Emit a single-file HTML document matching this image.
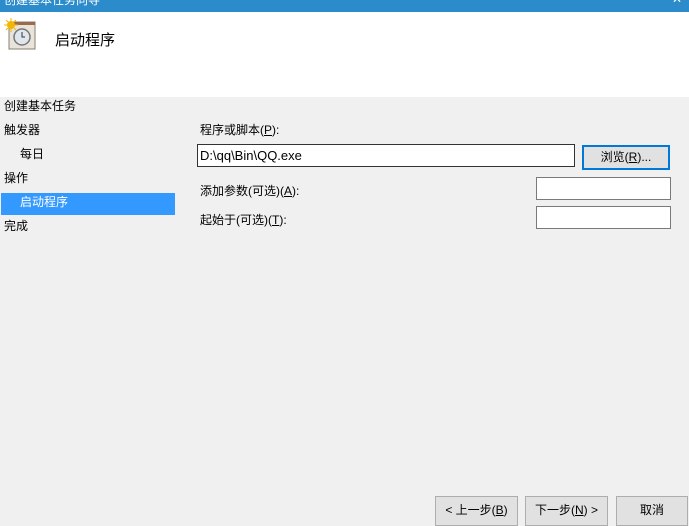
<!DOCTYPE html>
<html><head><meta charset="utf-8"><style>
body{margin:0;width:689px;height:524px;overflow:hidden;background:#f0f0f0;font-family:"Liberation Sans","Noto Sans CJK SC",sans-serif;font-size:12px;color:#000;position:relative}
.a{position:absolute;white-space:nowrap}
.box{position:absolute;box-sizing:border-box;background:#fff}
.btn{position:absolute;box-sizing:border-box;background:#e1e1e1;border:1px solid #adadad;text-align:center;line-height:26px}
u{text-decoration:underline}
</style></head><body>
<div class="a" style="left:0;top:0;width:689px;height:12px;background:#2b8bcb;overflow:hidden">
<div class="a" style="left:4px;top:-9px;color:#fff;font-size:12px">创建基本任务向导</div>
<div class="a" style="left:672px;top:-8px;color:#fff;font-size:12px">✕</div>
</div>
<div class="a" style="left:0;top:12px;width:689px;height:85px;background:#fff"></div>
<svg class="a" style="left:4px;top:18px" width="34" height="34" viewBox="0 0 34 34">
<rect x="5" y="4" width="26" height="27" fill="#e8e4dc" stroke="#8a7f70"/>
<rect x="5" y="4" width="26" height="3" fill="#9a6b4a"/>
<circle cx="18" cy="19" r="8" fill="#dfe6ee" stroke="#777" stroke-width="1.5"/>
<path d="M18 14v5h3" stroke="#333" fill="none"/>
<circle cx="7" cy="7" r="4" fill="#f5b400"/>
<path d="M7 0v3M7 11v3M0 7h3M11 7h3M2 2l2 2M10 10l2 2M2 12l2-2M10 4l2-2" stroke="#f5b400"/>
</svg>
<div class="a" style="left:55px;top:29px;font-size:15px">启动程序</div>
<div class="a" style="left:4px;top:97px">创建基本任务</div>
<div class="a" style="left:4px;top:121px">触发器</div>
<div class="a" style="left:20px;top:145px">每日</div>
<div class="a" style="left:4px;top:169px">操作</div>
<div class="a" style="left:1px;top:193px;width:174px;height:22px;background:#3399ff"></div>
<div class="a" style="left:20px;top:193px;color:#fff;line-height:18px">启动程序</div>
<div class="a" style="left:4px;top:217px">完成</div>
<div class="a" style="left:200px;top:121px">程序或脚本(<u>P</u>):</div>
<div class="box" style="left:197px;top:144px;width:378px;height:23px;border:1px solid #333;padding:3px 2px;font-size:13px">D:\qq\Bin\QQ.exe</div>
<div class="btn" style="left:582px;top:145px;width:88px;height:25px;border:2px solid #0078d7;line-height:21px">浏览(<u>R</u>)...</div>
<div class="a" style="left:200px;top:182px">添加参数(可选)(<u>A</u>):</div>
<div class="box" style="left:536px;top:177px;width:135px;height:23px;border:1px solid #7a7a7a"></div>
<div class="a" style="left:200px;top:211px">起始于(可选)(<u>T</u>):</div>
<div class="box" style="left:536px;top:206px;width:135px;height:23px;border:1px solid #7a7a7a"></div>
<div class="btn" style="left:435px;top:496px;width:83px;height:30px">&lt; 上一步(<u>B</u>)</div>
<div class="btn" style="left:525px;top:496px;width:83px;height:30px">下一步(<u>N</u>) &gt;</div>
<div class="btn" style="left:616px;top:496px;width:72px;height:30px">取消</div>
</body></html>
